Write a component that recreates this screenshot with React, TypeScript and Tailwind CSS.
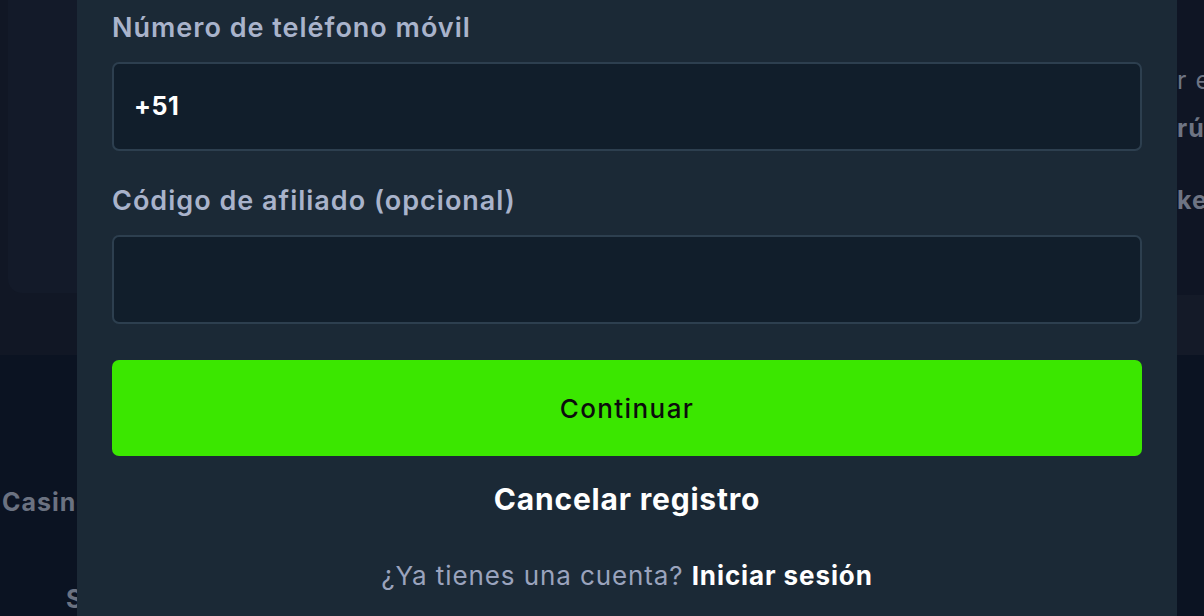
import React from 'react';

const font = { fontFamily: 'Inter, "Noto Sans", sans-serif' };

const Field = ({ label, value }: { label: string; value?: string }) => (
  <div className="flex flex-col">
    <label className="text-[27px] leading-[30px] font-semibold text-[#a9b3cb] tracking-[1px]">{label}</label>
    <div className="mt-[19px] h-[89px] rounded-[7px] border-2 border-[#2d3f4f] bg-[#111e2b] flex items-center px-5">
      <span className="text-[25px] font-bold text-white tracking-[0.5px]">{value}</span>
    </div>
  </div>
);

export default function App() {
  return (
    <div className="relative w-[1204px] h-[616px] overflow-hidden bg-[#0b1322]" style={font}>
      {/* site behind the modal */}
      <div className="flex flex-col h-full">
        <div className="h-[355px] bg-[#111725] flex">
          <div className="w-[77px] pl-2">
            <div className="h-[293px] rounded-bl-[14px] bg-[#131a29]" />
          </div>
          <div className="flex-1" />
          <div className="w-[27px] flex flex-col">
            <div className="h-[295px] bg-[#0f1524] pt-[66px] overflow-hidden whitespace-nowrap text-[#6e7483] text-[25px] tracking-[1px]">
              <p className="leading-[28px]">r en</p>
              <p className="mt-5 leading-[28px] font-bold">rúbrica</p>
              <p className="mt-[44px] leading-[28px] font-bold">kenos</p>
            </div>
            <div className="flex-1 bg-[#141a28]" />
          </div>
        </div>
        <div className="flex-1 pt-[132px] overflow-hidden">
          <p className="pl-[2px] text-[25px] font-bold text-[#6b7281] whitespace-nowrap leading-[30px] tracking-[1px]">Casino</p>
          <p className="mt-[67px] pl-[66px] text-[25px] font-bold text-[#6b7281] leading-[30px]">S</p>
        </div>
      </div>

      {/* modal */}
      <div className="absolute left-[77px] top-0 w-[1100px] h-full bg-[#1b2936] px-[35px] pt-[13px]">
        <Field label="Número de teléfono móvil" value="+51" />
        <div className="mt-[35px]">
          <Field label="Código de afiliado (opcional)" />
        </div>
        <button className="mt-[36px] w-full h-[96px] rounded-[7px] bg-[#3be700] text-[#0c0c0c] text-[26px] font-medium tracking-[1.4px]">
          Continuar
        </button>
        <p className="mt-[26px] text-center text-[30px] leading-[34px] font-bold text-white tracking-[0.8px]">Cancelar registro</p>
        <p className="mt-[45px] text-center text-[26px] leading-[30px] text-[#9aa3bd] tracking-[0.9px]">
          ¿Ya tienes una cuenta? <span className="font-bold text-white">Iniciar sesión</span>
        </p>
      </div>
    </div>
  );
}
